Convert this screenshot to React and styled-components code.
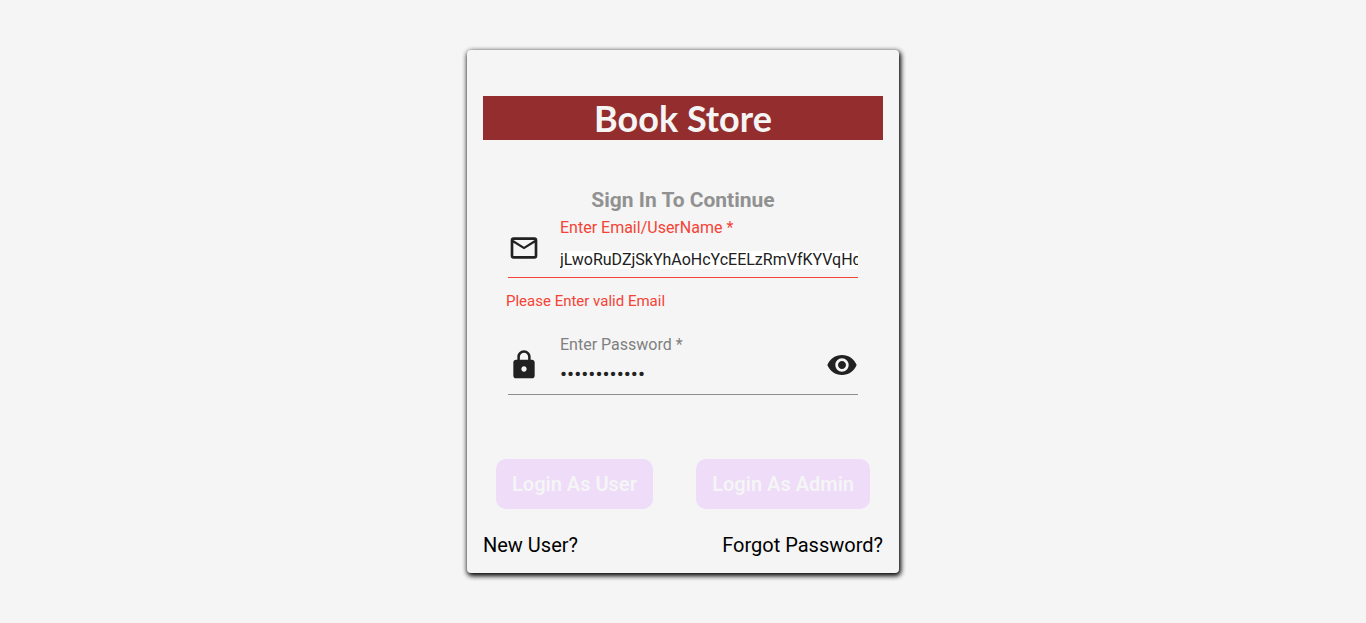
import React, { useState } from 'react';
import styled, { createGlobalStyle } from 'styled-components';
import { MdMailOutline, MdLock, MdVisibility } from 'react-icons/md';

const GlobalStyle = createGlobalStyle`
  *, *::before, *::after { box-sizing: border-box; }
  body {
    margin: 0;
    background: #f5f5f5;
    color: #000;
    font-family: Roboto, "Liberation Sans", sans-serif;
  }
`;

const Page = styled.main`
  display: flex;
  justify-content: center;
  align-items: center;
  min-height: 100vh;
  padding: 24px 16px;
`;

const Card = styled.form`
  width: 100%;
  max-width: 432px;
  padding: 46px 16px 16px;
  border-radius: 4px;
  background: #f5f5f5;
  box-shadow: 1px 2px 5px 1px #000;
`;

const Brand = styled.h1`
  margin: 0;
  background: #942d2d;
  color: #f5f5f5;
  font: 700 36px/44px Lato, "Liberation Sans", sans-serif;
  text-align: center;
`;

const Subtitle = styled.h2`
  margin: 48px 0 0;
  color: #919191;
  font-size: 21px;
  font-weight: 700;
  line-height: 24px;
  text-align: center;
`;

const Field = styled.div`
  display: flex;
  align-items: center;
  gap: 20px;
  height: 60px;
  margin: ${({ $top }) => $top}px 25px 0;
  border-bottom: 1px solid ${({ $invalid }) => ($invalid ? '#f44336' : '#8e8e8e')};
  color: #212121;

  svg { flex: none; display: block; }
`;

const FieldBody = styled.div`
  flex: 1;
  min-width: 0;
  align-self: stretch;
  display: flex;
  flex-direction: column;
  gap: ${({ $gap }) => $gap}px;
`;

const Label = styled.label`
  color: ${({ $invalid }) => ($invalid ? '#f44336' : '#808080')};
  font-size: 16px;
  line-height: 20px;
`;

const Input = styled.input`
  width: 100%;
  height: 18px;
  padding: 0;
  border: 0;
  outline: 0;
  background: ${({ $fill }) => $fill || 'transparent'};
  color: #212121;
  font: 400 16px/18px Roboto, "Liberation Sans", sans-serif;

  &[type='password'] { font-size: 21px; }
`;

const ErrorText = styled.p`
  margin: 13px 23px 0;
  color: #f44336;
  font-size: 15px;
  line-height: 20px;
`;

const IconButton = styled.button`
  padding: 0;
  border: 0;
  background: none;
  color: inherit;
  cursor: pointer;
`;

const Actions = styled.div`
  display: flex;
  justify-content: space-between;
  margin: 64px 13px 0;
`;

const LoginButton = styled.button`
  height: 50px;
  padding: 0 16px;
  border: 0;
  border-radius: 10px;
  background: #eedcf9;
  color: #f5f5f5;
  font: 600 20px/24px Roboto, "Liberation Sans", sans-serif;
`;

const Links = styled.nav`
  display: flex;
  justify-content: space-between;
  margin-top: 24px;
`;

const Link = styled.a`
  color: #000;
  font-size: 20px;
  line-height: 24px;
  text-decoration: none;
`;

export default function App() {
  const [email, setEmail] = useState('jLwoRuDZjSkYhAoHcYcEELzRmVfKYVqHdTbNs');
  const [password, setPassword] = useState('bookstore123');
  const [visible, setVisible] = useState(false);

  return (
    <>
      <GlobalStyle />
      <Page>
        <Card onSubmit={(e) => e.preventDefault()} noValidate>
          <Brand>Book Store</Brand>
          <Subtitle>Sign In To Continue</Subtitle>
          <Field $top={6} $invalid>
            <MdMailOutline size={32} />
            <FieldBody $gap={13}>
              <Label htmlFor="email" $invalid>Enter Email/UserName *</Label>
              <Input
                id="email"
                type="text"
                $fill="#fff"
                value={email}
                onChange={(e) => setEmail(e.target.value)}
                aria-invalid="true"
                aria-describedby="email-error"
              />
            </FieldBody>
          </Field>
          <ErrorText id="email-error">Please Enter valid Email</ErrorText>
          <Field $top={24}>
            <MdLock size={32} />
            <FieldBody $gap={10}>
              <Label htmlFor="password">Enter Password *</Label>
              <Input
                id="password"
                type={visible ? 'text' : 'password'}
                value={password}
                onChange={(e) => setPassword(e.target.value)}
              />
            </FieldBody>
            <IconButton type="button" aria-label="Show password" onClick={() => setVisible(!visible)}>
              <MdVisibility size={32} />
            </IconButton>
          </Field>
          <Actions>
            <LoginButton type="submit" disabled>Login As User</LoginButton>
            <LoginButton type="submit" disabled>Login As Admin</LoginButton>
          </Actions>
          <Links>
            <Link href="#register">New User?</Link>
            <Link href="#forgot">Forgot Password?</Link>
          </Links>
        </Card>
      </Page>
    </>
  );
}
